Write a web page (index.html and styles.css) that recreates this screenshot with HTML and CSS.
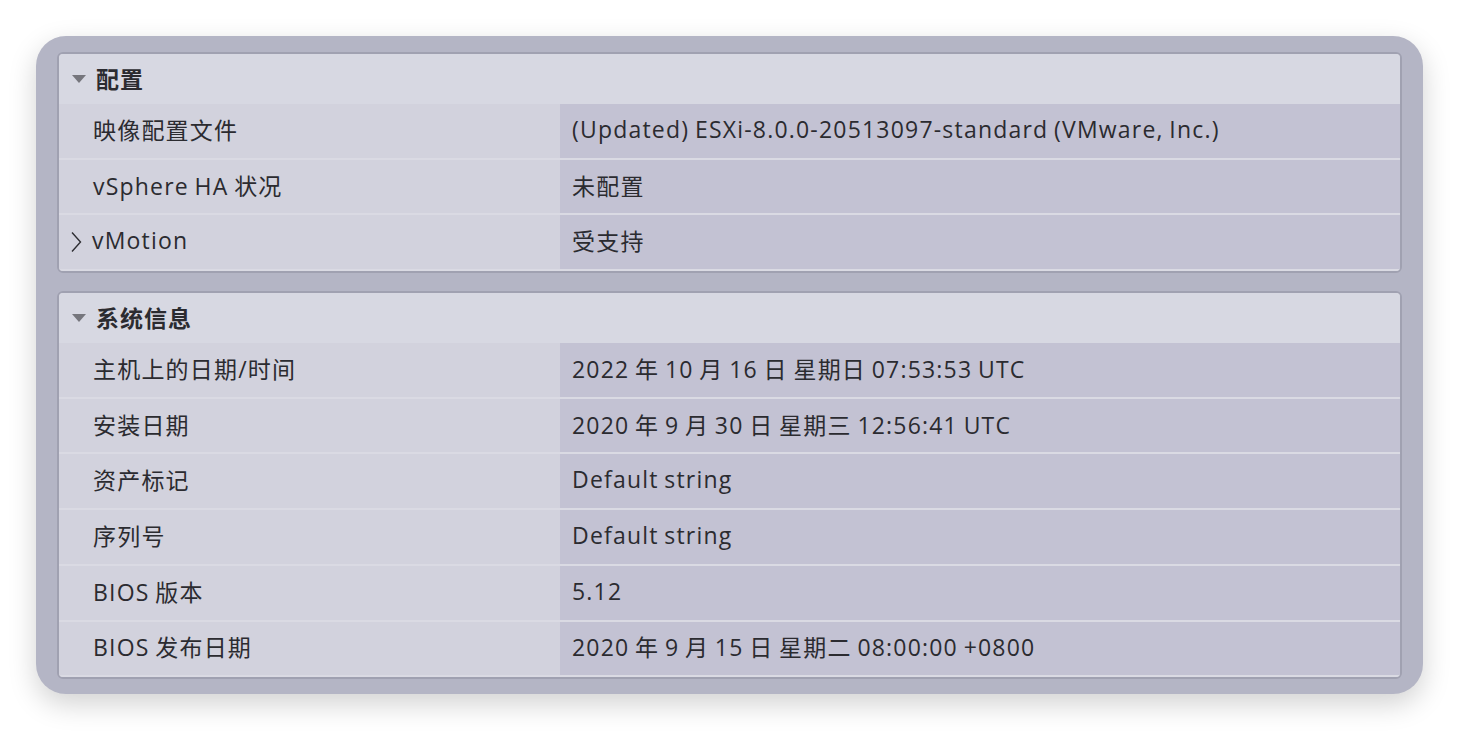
FILE: index.html
```html
<!DOCTYPE html>
<html lang="zh-CN">
<head>
    <meta charset="UTF-8">
    <meta name="viewport" content="width=device-width, initial-scale=1.0">
    <title>主机摘要</title>
    <link rel="stylesheet" href="styles.css">
</head>
<body>
    <div class="frame">
        <section class="panel">
            <div class="panel-header">
                <span class="caret-down"></span>
                <span>配置</span>
            </div>
            <div class="row">
                <div class="key">映像配置文件</div>
                <div class="val">(Updated) ESXi-8.0.0-20513097-standard (VMware, Inc.)</div>
            </div>
            <div class="row">
                <div class="key">vSphere HA 状况</div>
                <div class="val">未配置</div>
            </div>
            <div class="row">
                <div class="key expandable">
                    <svg class="chevron" width="12" height="22" viewBox="0 0 12 22">
                        <path d="M2 1.5 L10.5 11 L2 20.5" fill="none" stroke="#2e2e33" stroke-width="1.4"/>
                    </svg>
                    <span>vMotion</span>
                </div>
                <div class="val">受支持</div>
            </div>
        </section>

        <section class="panel">
            <div class="panel-header">
                <span class="caret-down"></span>
                <span>系统信息</span>
            </div>
            <div class="row">
                <div class="key">主机上的日期/时间</div>
                <div class="val">2022 年 10 月 16 日 星期日 07:53:53 UTC</div>
            </div>
            <div class="row">
                <div class="key">安装日期</div>
                <div class="val">2020 年 9 月 30 日 星期三 12:56:41 UTC</div>
            </div>
            <div class="row">
                <div class="key">资产标记</div>
                <div class="val">Default string</div>
            </div>
            <div class="row">
                <div class="key">序列号</div>
                <div class="val">Default string</div>
            </div>
            <div class="row">
                <div class="key">BIOS 版本</div>
                <div class="val">5.12</div>
            </div>
            <div class="row">
                <div class="key">BIOS 发布日期</div>
                <div class="val">2020 年 9 月 15 日 星期二 08:00:00 +0800</div>
            </div>
        </section>
    </div>
</body>
</html>
```

FILE: styles.css
```css
:root {
    --frame-color: #b4b5c5;
    --panel-border: #a0a1b1;
    --header-bg: #d7d8e2;
    --key-bg: #d2d2dd;
    --val-bg: #c3c2d3;
    --row-line: #dadae3;
    --text-color: #2b2b30;
}

body {
    margin: 0;
    padding-bottom: 40px;
    background-color: #ffffff;
    font-family: "Open Sans", "Noto Sans CJK SC", sans-serif;
    color: var(--text-color);
}

.frame {
    width: 1345px;
    margin: 36px 0 0 36px;
    padding: 16px 21px 15px 21px;
    background-color: var(--frame-color);
    border-radius: 30px;
    box-shadow: 0 10px 28px rgba(0, 0, 0, 0.18);
    display: flex;
    flex-direction: column;
    gap: 18px;
}

.panel {
    border: 2px solid var(--panel-border);
    border-radius: 6px;
    overflow: hidden;
    background-color: var(--key-bg);
}

.panel-header {
    height: 50px;
    display: flex;
    align-items: center;
    padding: 0 0 3px 13px;
    box-sizing: border-box;
    gap: 10px;
    background-color: var(--header-bg);
    font-family: "Noto Sans CJK SC", sans-serif;
    font-size: 23px;
    font-weight: 700;
    letter-spacing: 1px;
}

.caret-down {
    width: 0;
    height: 0;
    border-left: 7px solid transparent;
    border-right: 7px solid transparent;
    border-top: 8px solid #76767d;
    margin-top: 3px;
}

.row {
    display: flex;
    height: 53.7px;
    border-bottom: 2px solid var(--row-line);
    font-size: 23px;
    letter-spacing: 1.2px;
    word-spacing: -1.5px;
}

.key {
    width: 467px;
    padding: 0 0 4px 34px;
    display: flex;
    align-items: center;
    background-color: var(--key-bg);
}

.key.expandable {
    padding-left: 11px;
    width: 490px;
    gap: 10px;
}

.chevron {
    display: block;
    margin-top: 3px;
}

.val {
    flex: 1;
    padding: 0 0 4px 12px;
    display: flex;
    align-items: center;
    background-color: var(--val-bg);
}
```
